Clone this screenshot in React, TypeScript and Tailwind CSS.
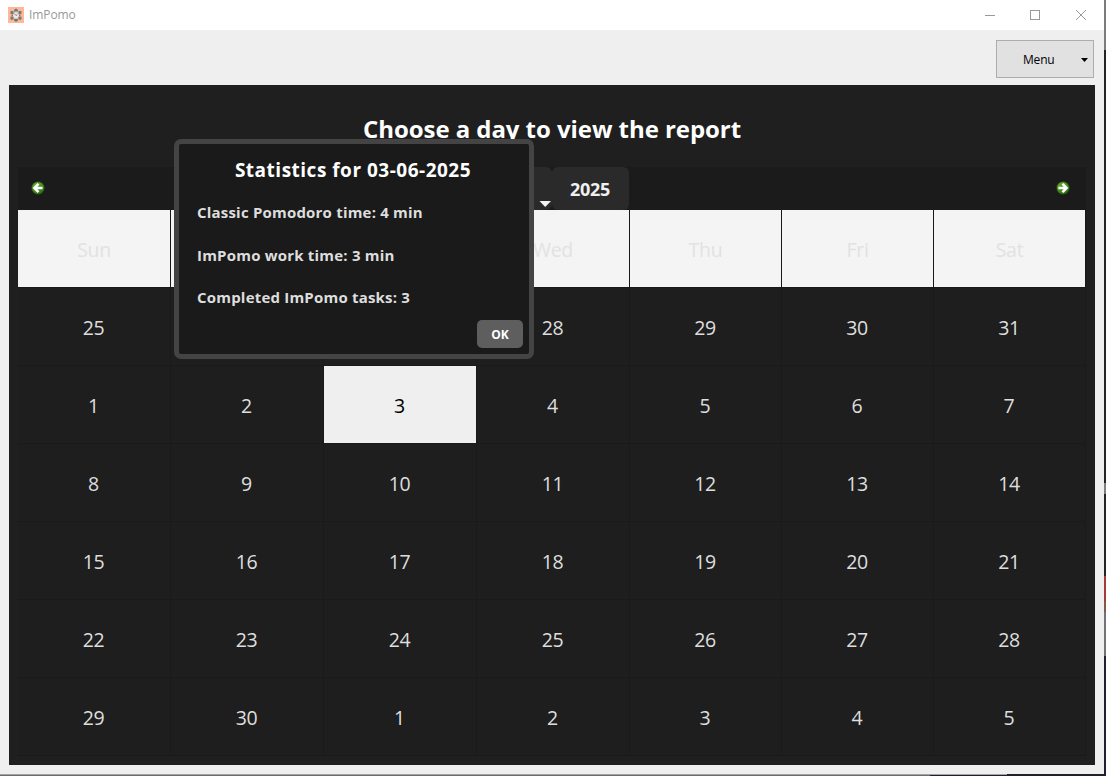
import React from "react";

const days = ["Sun", "", "", "Wed", "Thu", "Fri", "Sat"];
const weeks = [
  ["25", "", "", "28", "29", "30", "31"],
  ["1", "2", "3", "4", "5", "6", "7"],
  ["8", "9", "10", "11", "12", "13", "14"],
  ["15", "16", "17", "18", "19", "20", "21"],
  ["22", "23", "24", "25", "26", "27", "28"],
  ["29", "30", "1", "2", "3", "4", "5"],
];

function AppIcon() {
  return (
    <svg width="16" height="16" viewBox="0 0 16 16" className="ml-2">
      <rect width="16" height="16" fill="#ffb797" />
      <circle cx="8" cy="8.2" r="3.6" fill="#cfc7c0" />
      <g fill="#857873">
        <rect x="6" y="2.5" width="4" height="2" />
        <rect x="2.5" y="4" width="3" height="3" />
        <rect x="10.5" y="4" width="3" height="3" />
        <rect x="2.5" y="9.5" width="3" height="3" />
        <rect x="10.5" y="9.5" width="3" height="3" />
        <rect x="6" y="12" width="4" height="2" />
        <rect x="3.5" y="7.5" width="1.5" height="1.5" />
        <rect x="11" y="7.5" width="1.5" height="1.5" />
      </g>
      <g fill="#3d8d98">
        <rect x="7" y="1.8" width="2" height="1.6" />
        <rect x="3" y="4" width="1.6" height="1.6" />
        <rect x="11.4" y="4" width="1.6" height="1.6" />
        <rect x="3" y="11" width="1.6" height="1.6" />
        <rect x="11.4" y="11" width="1.6" height="1.6" />
        <rect x="7" y="13" width="2" height="1.6" />
      </g>
      <circle cx="8" cy="8.3" r="2.6" fill="#f2ece4" />
      <path d="M6.3 6.5 8 8.6 9.6 7.2" fill="none" stroke="#6a625e" strokeWidth="0.8" />
    </svg>
  );
}

function Arrow({ right = false }: { right?: boolean }) {
  return (
    <svg width="14" height="14" viewBox="0 0 14 14">
      <defs>
        <linearGradient id={right ? "next-fill" : "prev-fill"} x1="0" y1="0" x2="0.6" y2="1">
          <stop offset="0" stopColor="#78b33c" />
          <stop offset="1" stopColor="#2b7410" />
        </linearGradient>
      </defs>
      <circle cx="7" cy="7" r="6.2" fill={right ? "url(#next-fill)" : "url(#prev-fill)"} stroke="#245c10" strokeWidth="0.7" />
      <path
        d={right ? "M6.5 2.9 10.6 7l-4.1 4.1M10.2 7H2.4" : "M7.5 2.9 3.4 7l4.1 4.1M3.8 7h7.8"}
        fill="none"
        stroke="#fff"
        strokeWidth="2.5"
      />
    </svg>
  );
}

function TitleBar() {
  return (
    <header className="flex h-[30px] items-center bg-white">
      <AppIcon />
      <span className="ml-[5px] text-[12px] leading-4 tracking-[-0.1px] text-[#999]">ImPomo</span>
      <svg width="106" height="12" viewBox="0 0 106 12" className="mr-[16px] mb-[1px] ml-auto" fill="none" stroke="#999" shapeRendering="crispEdges">
        <path d="M3 6.5h10M48.5 1.5h9v9h-9z" />
        <path d="m94 1 10 10M104 1 94 11" shapeRendering="auto" />
      </svg>
    </header>
  );
}

function Calendar() {
  return (
    <section className="w-[1068px]">
      <div className="flex h-[43px] items-center bg-[#1b1b1b] font-bold text-[#f0f0f0]">
        <div className="flex w-[459px] items-center pb-[2px] pl-[13px]">
          <Arrow />
        </div>
        <div className="flex h-full w-[75px] items-end justify-end rounded-md bg-[#2a2a2a] pr-[1px]">
          <svg width="12" height="8" viewBox="0 0 12 8" className="mb-[1px]">
            <path d="M0.5 0h11.5L6.2 6z" fill="#f4f4f4" />
          </svg>
        </div>
        <div className="flex h-full w-[77px] items-center justify-center rounded-md bg-[#2a2a2a] pt-[2px] pr-[1px]">
          <span className="text-[18px] tracking-[-0.3px]">2025</span>
        </div>
        <div className="ml-auto flex items-center pr-[16px] pb-[2px]">
          <Arrow right />
        </div>
      </div>
      <div className="grid grid-cols-[153px_153px_153px_153px_152px_152px_152px] grid-rows-[repeat(7,78px)] text-[19.5px] tracking-[-0.3px] text-[#dedede]">
        {days.map((day, col) => (
          <div key={col} className="flex items-center justify-center border-r border-b border-[#181818] bg-[#f4f4f4] pt-[3px] text-[#e2e2e2]">
            {day}
          </div>
        ))}
        {weeks.map((week, row) =>
          week.map((day, col) => (
            <div
              key={`${row}-${col}`}
              className={`flex items-center justify-center border-r border-b border-[#1a1a1a] pt-[3px] pr-[1px] ${
                row === 1 && col === 2 ? "bg-[#efefef] text-black" : "bg-[#1e1e1e]"
              }`}
            >
              {day}
            </div>
          )),
        )}
      </div>
    </section>
  );
}

function StatsDialog() {
  return (
    <div className="absolute top-[139px] left-[174px] flex h-[220px] w-[360px] flex-col rounded-[7px] border-[5px] border-[#444] bg-[#1a1a1a] font-bold whitespace-nowrap">
      <h2 className="mt-[12px] -ml-[2px] text-center text-[19px] leading-7 tracking-[0.5px] text-white">Statistics for 03-06-2025</h2>
      <div className="mt-[18px] ml-[18px] flex flex-col gap-[22.5px] text-[15px] leading-5 tracking-[0.2px] text-[#dedede]">
        <p>Classic Pomodoro time: 4 min</p>
        <p>ImPomo work time: 3 min</p>
        <p>Completed ImPomo tasks: 3</p>
      </div>
      <button className="mt-auto mr-[6px] mb-[6px] h-7 w-[46px] self-end rounded-[5px] bg-[#5e5e5e] pt-[2px] text-[12px] text-white">OK</button>
    </div>
  );
}

function DesktopEdge() {
  return (
    <div className="flex w-[2px] flex-col">
      <div className="h-[50px] bg-[#7c7c7c]" />
      <div className="h-[433px] bg-[#232427]" />
      <div className="h-[11px] bg-[#7d7f80]" />
      <div className="h-[82px] bg-[#232427]" />
      <div className="h-[25px] bg-[#a53a3a]" />
      <div className="h-[11px] bg-[#7e5a4c]" />
      <div className="h-[44px] bg-[#727276]" />
      <div className="flex-1 bg-[#1f2030]" />
    </div>
  );
}

export default function App() {
  return (
    <div className="relative h-[776px] w-[1106px] overflow-hidden bg-[#1f2030] font-['Open_Sans','Noto_Sans',sans-serif]">
      <div className="flex h-[774px]">
        <main className="w-[1104px] bg-[#efefef]">
          <TitleBar />
          <div className="flex h-[55px] justify-end pt-[10px] pr-[10px]">
            <button className="flex h-[38px] w-[98px] items-center border border-[#adadad] bg-[#e1e1e1] pt-[1px] pl-[26px] text-[12px] tracking-[-0.2px] text-black">
              Menu
              <svg width="7" height="4" viewBox="0 0 7 4" className="mr-[5px] ml-auto">
                <path d="M0 0h7L3.5 4z" />
              </svg>
            </button>
          </div>
          <div className="ml-[9px] flex h-[680px] w-[1086px] flex-col items-center bg-[#1f1f1f]">
            <h1 className="flex h-[82px] items-center pt-[6px] text-[24px] font-bold tracking-[-0.06px] whitespace-nowrap text-white">
              Choose a day to view the report
            </h1>
            <Calendar />
          </div>
        </main>
        <DesktopEdge />
      </div>
      <div className="h-px w-[1007px] bg-[#a3a3a3]" />
      <div className="h-px w-[930px] bg-[#6f6a6e]" />
      <StatsDialog />
    </div>
  );
}
